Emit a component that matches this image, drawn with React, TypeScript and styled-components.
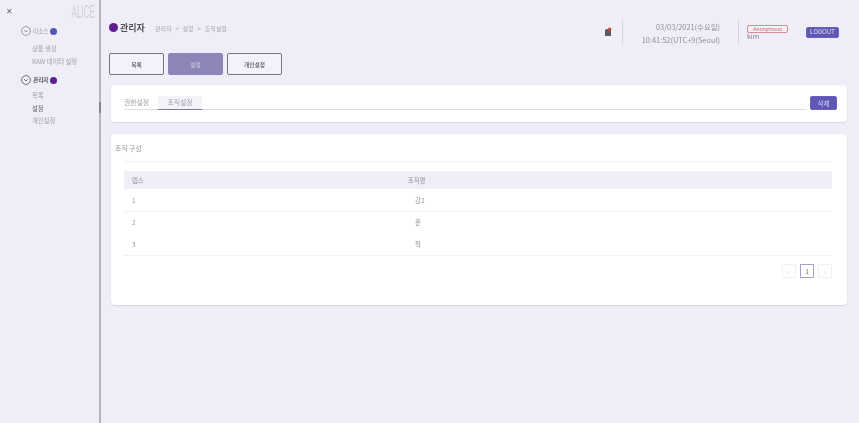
import React from 'react';
import styled, { createGlobalStyle } from 'styled-components';

const Global = createGlobalStyle`
  html, body { margin: 0; padding: 0; height: 100%; background: #eeedf8; }
  #root { height: 100%; }
  * { box-sizing: border-box; }
`;

const Page = styled.div`
  display: flex;
  width: 859px;
  height: 423px;
  overflow: hidden;
  background: #eeedf8;
  font-family: 'Noto Sans CJK KR', 'Noto Sans', sans-serif;
  color: #8a8a92;
  filter: blur(0.4px);
`;

const Sidebar = styled.aside`
  position: relative;
  width: 101px;
  flex: none;
  border-right: 2px solid #b6b5bf;
  padding: 4px 4px 0 5px;

  &::after {
    content: '';
    position: absolute;
    right: -2px;
    top: 102px;
    width: 2px;
    height: 11px;
    background: #85848f;
  }
`;

const SideTop = styled.div`
  display: flex;
  justify-content: space-between;
  align-items: center;
  height: 15px;
  margin-bottom: 6px;
`;

const Close = styled.span`
  font-size: 8px;
  line-height: 1;
  color: #666670;
  margin-left: 1px;
  font-family: 'Liberation Sans', sans-serif;
`;

const Logo = styled.span`
  font-family: 'Liberation Sans', sans-serif;
  font-size: 18px;
  line-height: 1;
  font-weight: 400;
  color: #d0cfd9;
  transform: scaleX(0.45);
  transform-origin: right center;
`;

const Group = styled.div`
  padding-left: 16px;
  margin-bottom: 6px;
`;

const GroupHead = styled.div<{ $active?: boolean }>`
  display: flex;
  align-items: center;
  gap: 2px;
  height: 12px;
  margin-bottom: ${p => (p.$active ? '4px' : '6px')};
  font-size: 5.6px;
  font-weight: ${p => (p.$active ? 700 : 400)};
  color: ${p => (p.$active ? '#55555e' : '#9a9aa4')};
`;

const Dot = styled.span<{ $color: string; $size: number }>`
  display: inline-block;
  flex: none;
  width: ${p => p.$size}px;
  height: ${p => p.$size}px;
  border-radius: 50%;
  background: ${p => p.$color};
`;

const SideItem = styled.div<{ $active?: boolean }>`
  font-size: 6.3px;
  line-height: 12.6px;
  padding-left: 11px;
  white-space: nowrap;
  color: ${p => (p.$active ? '#66666f' : '#a2a2ab')};
`;

const Main = styled.main`
  flex: 1;
  min-width: 0;
  padding: 0 12px 0 8px;
`;

const Header = styled.header`
  display: flex;
  align-items: flex-start;
  height: 53px;
`;

const Title = styled.div`
  display: flex;
  align-items: center;
  gap: 2px;
  font-size: 9px;
  font-weight: 700;
  color: #55555e;
  width: 46px;
  margin-top: 20px;
  height: 14px;
`;

const Crumbs = styled.div`
  font-size: 6px;
  line-height: 10px;
  color: #a5a5ae;
  word-spacing: 2.5px;
  margin-top: 24px;
`;

const HeaderRight = styled.div`
  margin-left: auto;
  margin-top: 20px;
  display: flex;
  align-items: center;
  height: 24px;
`;

const Clock = styled.div`
  border-left: 1px solid #d2d1dc;
  border-right: 1px solid #d2d1dc;
  width: 117px;
  height: 24px;
  margin: 0 0 0 10px;
  padding-right: 18px;
  text-align: right;
  font-size: 7.4px;
  line-height: 13px;
  white-space: nowrap;
  color: #8f8f98;
`;

const User = styled.div`
  width: 67px;
  height: 24px;
  padding-left: 8px;
  font-size: 7px;
  line-height: 7px;
  color: #85858e;
`;

const Badge = styled.div`
  width: 41px;
  height: 8px;
  margin-top: 5px;
  border: 1px solid #d98a94;
  border-radius: 2px;
  background: #f6f1f6;
  color: #a07a85;
  font-size: 5.5px;
  line-height: 6px;
  text-align: center;
  font-family: 'Roboto', sans-serif;
`;

const PurpleButton = styled.button<{ $w: number; $h: number }>`
  flex: none;
  width: ${p => p.$w}px;
  height: ${p => p.$h}px;
  padding: 0;
  border: 1px solid #6a62bc;
  border-radius: 2px;
  background: #5f57b5;
  color: #dddcf2;
  font-size: 6.5px;
  font-family: 'Roboto', 'Noto Sans CJK KR', sans-serif;
`;

const Logout = styled(PurpleButton)`
  margin-right: 8px;
`;

const Segments = styled.div`
  display: flex;
  gap: 4px;
  margin: 0 0 10px 0;
  height: 22px;
`;

const Segment = styled.button<{ $active?: boolean }>`
  width: 55px;
  height: 22px;
  padding: 0;
  border-radius: 2px;
  border: 1px solid ${p => (p.$active ? '#8c86b8' : '#77767f')};
  background: ${p => (p.$active ? '#8c86b8' : '#f3f2fa')};
  color: ${p => (p.$active ? '#c9c7e4' : '#55555e')};
  font-size: 5.7px;
  font-weight: 500;
  font-family: 'Noto Sans CJK KR', sans-serif;
`;

const Card = styled.section`
  margin-left: 2px;
  background: #fff;
  border-radius: 4px;
  box-shadow: 0 1px 1px #d6d5e0, 0 0 1px #dcdbe6;
`;

const TabCard = styled(Card)`
  display: flex;
  align-items: flex-start;
  height: 37px;
  padding: 11px 10px 0 13px;
  margin-bottom: 12px;
`;

const Tabs = styled.div`
  display: flex;
  flex: 1;
  height: 14px;
  border-bottom: 1px solid #dddce4;
  margin-right: 4px;
`;

const Tab = styled.div<{ $active?: boolean }>`
  width: ${p => (p.$active ? '44px' : '34px')};
  text-align: ${p => (p.$active ? 'center' : 'left')};
  font-size: 6.8px;
  line-height: 13px;
  height: 14px;
  color: #a0a0a9;
  background: ${p => (p.$active ? '#f4f3fa' : 'transparent')};
  border-bottom: ${p => (p.$active ? '1px solid #7d76bd' : 'none')};
`;

const OrgCard = styled(Card)`
  height: 171px;
  padding: 0 15px 0 13px;
`;

const CardTitle = styled.div`
  height: 28px;
  margin: 0 0 9px 0;
  padding: 7px 0 0 0;
  border-bottom: 1px solid #f1f0f6;
  font-size: 6.8px;
  line-height: 14px;
  color: #94949d;

  span {
    margin-left: -9px;
  }
`;

const Table = styled.table`
  width: 100%;
  border-collapse: collapse;
  table-layout: fixed;
`;

const HeadRow = styled.tr`
  height: 18px;
  background: #efeef6;
`;

const Th = styled.th`
  font-size: 6.3px;
  font-weight: 400;
  color: #8f8f98;
  text-align: left;
  padding: 0 0 0 8px;
`;

const Row = styled.tr`
  height: 22px;
  border-bottom: 1px solid #f3f2f7;

  &:nth-child(2) {
    border-bottom-color: transparent;
  }
`;

const Td = styled.td<{ $indent?: boolean }>`
  font-size: 6.5px;
  color: #94949d;
  padding: 0 0 0 ${p => (p.$indent ? '15px' : '8px')};
`;

const Pager = styled.div`
  display: flex;
  justify-content: flex-end;
  gap: 4px;
  margin-top: 8px;
`;

const PageBox = styled.div<{ $current?: boolean }>`
  display: flex;
  align-items: center;
  justify-content: center;
  width: 14px;
  height: 14px;
  font-size: 6.5px;
  border: 1px solid ${p => (p.$current ? '#a5a2cb' : '#f1f0f6')};
  color: ${p => (p.$current ? '#6c6c80' : '#c5c5cf')};
`;

const ChevronCircle = ({ dark }: { dark?: boolean }) => (
  <svg width="10" height="10" viewBox="0 0 10 10" fill="none" stroke={dark ? '#4f4f58' : '#85858e'} strokeWidth="0.8">
    <circle cx="5" cy="5" r="4.4" />
    <path d="M3.2 4.2 L5 6 L6.8 4.2" />
  </svg>
);

const Bell = () => (
  <svg width="8" height="10" viewBox="0 0 8 10">
    <path d="M1 3.5 Q1 2 2.5 2 L5.5 2 Q7 2 7 3.5 L7 9 L1 9 Z" fill="#5b5b66" />
    <circle cx="5.6" cy="2.2" r="1.7" fill="#c8443f" />
  </svg>
);

const rows = [
  ['1', '강2'],
  ['2', '준'],
  ['3', '혁'],
];

export default function App() {
  return (
    <Page>
      <Global />
      <Sidebar>
        <SideTop>
          <Close>✕</Close>
          <Logo>ALICE</Logo>
        </SideTop>
        <Group>
          <GroupHead>
            <ChevronCircle />
            리소스
            <Dot $color="#4f58b8" $size={7} />
          </GroupHead>
          <SideItem>상품 생성</SideItem>
          <SideItem>RAW 데이터 설정</SideItem>
        </Group>
        <Group>
          <GroupHead $active>
            <ChevronCircle dark />
            관리자
            <Dot $color="#5e1f8e" $size={7} />
          </GroupHead>
          <SideItem>목록</SideItem>
          <SideItem $active>설정</SideItem>
          <SideItem>개인설정</SideItem>
        </Group>
      </Sidebar>
      <Main>
        <Header>
          <Title>
            <Dot $color="#5e1f8e" $size={9} />
            관리자
          </Title>
          <Crumbs>관리자 &gt; 설정 &gt; 조직설정</Crumbs>
          <HeaderRight>
            <Bell />
            <Clock>
              03/03/2021(수요일)
              <br />
              10:41:52(UTC+9(Seoul)
            </Clock>
            <User>
              <Badge>Anonymous</Badge>
              kim
            </User>
            <Logout $w={33} $h={11}>LOGOUT</Logout>
          </HeaderRight>
        </Header>
        <Segments>
          <Segment>목록</Segment>
          <Segment $active>설정</Segment>
          <Segment>개인설정</Segment>
        </Segments>
        <TabCard>
          <Tabs>
            <Tab>권한설정</Tab>
            <Tab $active>조직설정</Tab>
          </Tabs>
          <PurpleButton $w={27} $h={14}>삭제</PurpleButton>
        </TabCard>
        <OrgCard>
          <CardTitle><span>조직 구성</span></CardTitle>
          <Table>
            <colgroup>
              <col style={{ width: '276px' }} />
              <col />
            </colgroup>
            <thead>
              <HeadRow>
                <Th>뎁스</Th>
                <Th>조직명</Th>
              </HeadRow>
            </thead>
            <tbody>
              {rows.map(r => (
                <Row key={r[0]}>
                  <Td>{r[0]}</Td>
                  <Td $indent>{r[1]}</Td>
                </Row>
              ))}
            </tbody>
          </Table>
          <Pager>
            <PageBox>‹</PageBox>
            <PageBox $current>1</PageBox>
            <PageBox>›</PageBox>
          </Pager>
        </OrgCard>
      </Main>
    </Page>
  );
}
